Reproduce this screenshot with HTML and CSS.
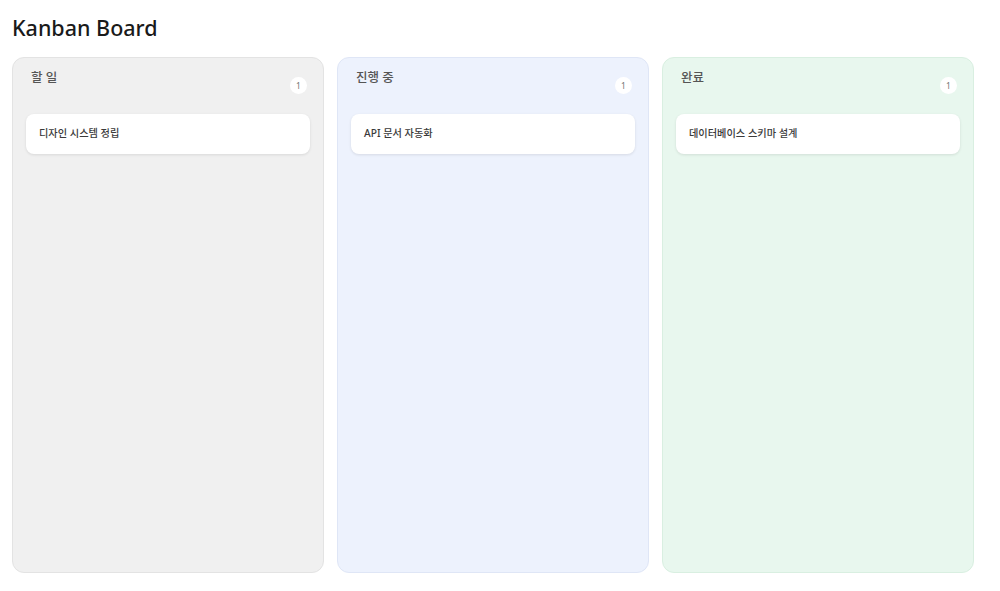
FILE: index.html
```html
<!DOCTYPE html>
<html lang="ko">
<head>
<meta charset="utf-8">
<title>Kanban Board</title>
<link rel="stylesheet" href="styles.css">
</head>
<body>
<h1 class="title">Kanban Board</h1>
<div class="board">
  <section class="column col-todo">
    <header class="col-head">
      <h2 class="col-title">할 일</h2>
      <span class="badge">1</span>
    </header>
    <div class="card">디자인 시스템 정립</div>
  </section>
  <section class="column col-doing">
    <header class="col-head">
      <h2 class="col-title">진행 중</h2>
      <span class="badge">1</span>
    </header>
    <div class="card">API 문서 자동화</div>
  </section>
  <section class="column col-done">
    <header class="col-head">
      <h2 class="col-title">완료</h2>
      <span class="badge">1</span>
    </header>
    <div class="card">데이터베이스 스키마 설계</div>
  </section>
</div>
</body>
</html>
```
FILE: styles.css
```css
* { box-sizing: border-box; }
html, body { margin: 0; background: #ffffff; }
body {
  padding: 14px 12px 0 12px;
  font-family: "Noto Sans", "Noto Sans CJK KR", sans-serif;
  color: #222;
}
.title {
  margin: 0 0 15px 0;
  font-size: 21.5px;
  font-weight: 500;
  line-height: 28px;
  color: #1a1a1a;
}
.board {
  display: grid;
  grid-template-columns: repeat(3, 312px);
  gap: 13px;
}
.column {
  height: 516px;
  border-radius: 12px;
  border: 1px solid #e2e2e2;
  padding: 12px 13px;
}
.col-todo { background: #f0f0f0; border-color: #e3e3e3; }
.col-doing { background: #edf2fd; border-color: #dfe6f6; }
.col-done { background: #e8f7ee; border-color: #d9efe1; }
.col-head {
  display: flex;
  justify-content: space-between;
  align-items: flex-start;
  padding: 0 3px 0 5px;
  height: 44px;
}
.col-title {
  margin: 0;
  font-size: 12.5px;
  font-weight: 500;
  line-height: 16px;
  color: #555;
}
.badge {
  margin-top: 7px;
  width: 17px;
  height: 17px;
  border-radius: 50%;
  background: #ffffff;
  font-size: 8.5px;
  line-height: 17px;
  text-align: center;
  color: #777;
}
.card {
  background: #ffffff;
  border-radius: 8px;
  height: 40px;
  padding: 0 13px 3px 13px;
  display: flex;
  align-items: center;
  font-size: 10.2px;
  font-weight: 500;
  color: #3a3a3a;
  box-shadow: 0 1px 3px rgba(0,0,0,0.10);
}
```
